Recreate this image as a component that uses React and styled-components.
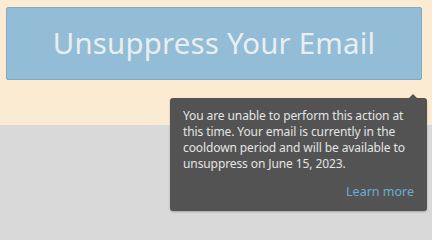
import React from 'react'
import styled, { createGlobalStyle } from 'styled-components'

const Global = createGlobalStyle`
  html, body {
    margin: 0;
    padding: 0;
    background: #d9d9d9;
    font-family: "Noto Sans", "Open Sans", sans-serif;
  }
`

const Page = styled.div`
  width: 432px;
  height: 216px;
  position: relative;
  overflow: hidden;
`

const Banner = styled.div`
  background: #fcebd3;
  height: 125px;
  padding: 7px 10px 0 6px;
  box-sizing: border-box;
`

const Button = styled.button`
  display: block;
  width: 416px;
  height: 73px;
  padding: 0 0 2px;
  border: 1px solid #82a9c2;
  border-radius: 2px;
  background: #93bcd6;
  color: #e9eef0;
  font-family: inherit;
  font-size: 29.4px;
  letter-spacing: 0.2px;
  cursor: not-allowed;
`

const Tooltip = styled.div`
  position: absolute;
  left: 170px;
  top: 98px;
  width: 257px;
  height: 113px;
  box-sizing: border-box;
  padding: 10px 10px 0 13px;
  background: #535353;
  border-radius: 3px;
  box-shadow: 0 1px 2px rgba(0, 0, 0, 0.25);
  color: #e4e4e4;
  font-size: 12px;
  line-height: 16px;

  &::before {
    content: '';
    position: absolute;
    top: -4px;
    right: 9px;
    border-left: 5px solid transparent;
    border-right: 5px solid transparent;
    border-bottom: 5px solid #535353;
  }
`

const Message = styled.p`
  margin: 0;
  letter-spacing: -0.1px;
`

const Footer = styled.div`
  display: flex;
  justify-content: flex-end;
  margin-top: 12px;
  padding-right: 3px;
`

const Link = styled.a`
  color: #6aaed8;
  text-decoration: none;
  font-size: 12.5px;
`

export default function App() {
  return (
    <Page>
      <Global />
      <Banner>
        <Button>Unsuppress Your Email</Button>
      </Banner>
      <Tooltip>
        <Message>
          You are unable to perform this action at this time. Your email is
          currently in the cooldown period and will be available to unsuppress
          on June 15, 2023.
        </Message>
        <Footer>
          <Link href="#">Learn more</Link>
        </Footer>
      </Tooltip>
    </Page>
  )
}
